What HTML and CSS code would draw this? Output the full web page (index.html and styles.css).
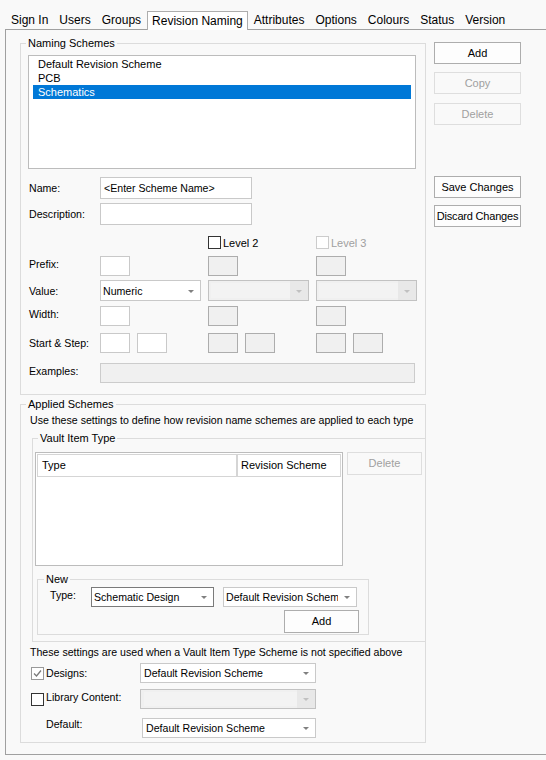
FILE: index.html
```html
<!DOCTYPE html>
<html>
<head>
  <title>Revision Naming</title>
  <link rel="stylesheet" href="styles.css">
</head>
<body>
  <div class="tabs">
    <span class="tab">Sign In</span>
    <span class="tab">Users</span>
    <span class="tab">Groups</span>
    <span class="tab active">Revision Naming</span>
    <span class="tab">Attributes</span>
    <span class="tab">Options</span>
    <span class="tab">Colours</span>
    <span class="tab">Status</span>
    <span class="tab">Version</span>
  </div>

  <div class="panel">
    <div class="top-area">
      <fieldset class="group naming">
        <legend>Naming Schemes</legend>
        <div class="scheme-list">
          <div class="scheme-item">Default Revision Scheme</div>
          <div class="scheme-item">PCB</div>
          <div class="scheme-item selected">Schematics</div>
        </div>

        <div class="form-row row-name">
          <span class="form-label">Name:</span>
          <div class="field name-field">&lt;Enter Scheme Name&gt;</div>
        </div>
        <div class="form-row row-desc">
          <span class="form-label">Description:</span>
          <div class="field name-field"></div>
        </div>
        <div class="form-row row-levels">
          <span class="form-label"></span>
          <div class="cell"></div>
          <div class="cell check-cell">
            <span class="check"></span><span class="check-text">Level 2</span>
          </div>
          <div class="cell check-cell disabled-text">
            <span class="check check-off"></span><span class="check-text">Level 3</span>
          </div>
        </div>
        <div class="form-row row-prefix">
          <span class="form-label raised">Prefix:</span>
          <div class="cell"><div class="field small"></div></div>
          <div class="cell"><div class="field small off"></div></div>
          <div class="cell"><div class="field small off"></div></div>
        </div>
        <div class="form-row row-value">
          <span class="form-label">Value:</span>
          <div class="cell">
            <div class="combo value-combo"><span class="combo-text">Numeric</span><span class="arrow"></span></div>
          </div>
          <div class="cell">
            <div class="combo value-combo off"><span class="combo-text"></span><span class="arrow"></span></div>
          </div>
          <div class="cell">
            <div class="combo value-combo off"><span class="combo-text"></span><span class="arrow"></span></div>
          </div>
        </div>
        <div class="form-row row-width">
          <span class="form-label raised">Width:</span>
          <div class="cell"><div class="field small"></div></div>
          <div class="cell"><div class="field small off"></div></div>
          <div class="cell"><div class="field small off"></div></div>
        </div>
        <div class="form-row row-start">
          <span class="form-label">Start &amp; Step:</span>
          <div class="cell"><div class="field small"></div><div class="field small"></div></div>
          <div class="cell"><div class="field small off"></div><div class="field small off"></div></div>
          <div class="cell"><div class="field small off"></div><div class="field small off"></div></div>
        </div>
        <div class="form-row row-examples">
          <span class="form-label raised">Examples:</span>
          <div class="field examples"></div>
        </div>
      </fieldset>

      <div class="side-buttons">
        <div class="btn">Add</div>
        <div class="btn off btn-copy">Copy</div>
        <div class="btn off btn-delete">Delete</div>
        <div class="btn btn-save">Save Changes</div>
        <div class="btn btn-discard">Discard Changes</div>
      </div>
    </div>

    <fieldset class="group applied">
      <legend>Applied Schemes</legend>
      <div class="hint hint-top">Use these settings to define how revision name schemes are applied to each type</div>

      <fieldset class="group vault">
        <legend>Vault Item Type</legend>
        <div class="list-row">
          <div class="listview">
            <div class="lv-head">
              <div class="lv-col lv-type">Type</div>
              <div class="lv-col lv-scheme">Revision Scheme</div>
            </div>
          </div>
          <div class="btn off lv-delete">Delete</div>
        </div>

        <fieldset class="group new-group">
          <legend>New</legend>
          <div class="type-row">
            <span class="type-label">Type:</span>
            <div class="combo type-combo focus"><span class="combo-text">Schematic Design</span><span class="arrow"></span></div>
            <div class="combo scheme-combo"><span class="combo-text">Default Revision Scheme</span><span class="arrow"></span></div>
          </div>
          <div class="add-row">
            <div class="btn add-btn">Add</div>
          </div>
        </fieldset>
      </fieldset>

      <div class="hint hint-bottom">These settings are used when a Vault Item Type Scheme is not specified above</div>

      <div class="opt-row row-designs">
        <span class="check checked">
          <svg width="11" height="11" viewBox="0 0 11 11"><polyline points="2,5.5 4.5,8 9,2.5" fill="none" stroke="#7a7a7a" stroke-width="1.3"/></svg>
        </span>
        <span class="opt-label">Designs:</span>
        <div class="combo opt-combo"><span class="combo-text">Default Revision Scheme</span><span class="arrow"></span></div>
      </div>
      <div class="opt-row row-library">
        <span class="check"></span>
        <span class="opt-label raised">Library Content:</span>
        <div class="combo opt-combo off"><span class="combo-text"></span><span class="arrow"></span></div>
      </div>
      <div class="opt-row row-default">
        <span class="opt-label default-label">Default:</span>
        <div class="combo opt-combo default-combo"><span class="combo-text">Default Revision Scheme</span><span class="arrow"></span></div>
      </div>
    </fieldset>
  </div>
</body>
</html>
```

FILE: styles.css
```css
body {
  margin: 0;
  width: 546px;
  height: 760px;
  overflow: hidden;
  background-color: #f9f9f9;
  font-family: "Liberation Sans", Arial, sans-serif;
  font-size: 10.6px;
  color: #000;
  white-space: nowrap;
}

/* tab strip */

.tabs {
  display: flex;
  align-items: flex-end;
  height: 18px;
  padding: 11px 0 0 5.5px;
}

.tab {
  padding: 0 5.5px;
  font-size: 12px;
  line-height: 18px;
}

.tab.active {
  position: relative;
  z-index: 1;
  margin-bottom: -1px;
  padding: 0 4.5px;
  background-color: #fff;
  border: 1px solid #adadad;
  border-bottom: none;
}

.panel {
  width: 560px;
  margin-left: 5px;
  padding: 6px 0 11px 14px;
  border: 1px solid #a0a0a0;
  background-color: #f9f9f9;
}

/* group boxes */

.group {
  margin: 0;
  padding: 0;
  min-width: 0;
  border: 1px solid #dcdcdc;
}

.group legend {
  margin-left: 5px;
  padding: 0 2px;
  line-height: 14px;
  font-size: 11px;
}

.top-area {
  display: flex;
  align-items: flex-start;
}

.naming {
  width: 404px;
  padding-bottom: 11px;
}

.scheme-list {
  width: 378px;
  height: 111px;
  margin: 5px 0 0 7px;
  padding: 1px 4px 0;
  background-color: #fff;
  border: 1px solid #bcbcbc;
  font-size: 11px;
}

.scheme-item {
  padding-left: 5px;
  line-height: 14px;
}

.scheme-item.selected {
  background-color: #0078d7;
  color: #fff;
}

/* form rows */

.form-row {
  display: flex;
  align-items: center;
  margin-left: 8px;
}

.form-label {
  flex: none;
  width: 71px;
}

.raised {
  margin-top: -4px;
}

.cell {
  flex: none;
  display: flex;
  align-items: center;
  gap: 7px;
  width: 108px;
}

.check-cell {
  gap: 0;
}

.row-name { margin-top: 8px; }
.row-desc { margin-top: 4px; }
.row-levels { margin-top: 11px; height: 13px; font-size: 11px; }
.row-prefix { margin-top: 7px; }
.row-value { margin-top: 4px; }
.row-width { margin-top: 5px; }
.row-start { margin-top: 7px; }
.row-examples { margin-top: 10px; }

.field {
  box-sizing: border-box;
  height: 22px;
  padding-left: 3px;
  line-height: 20px;
  background-color: #fff;
  border: 1px solid #c9c9c9;
}

.name-field {
  width: 152px;
}

.field.small {
  width: 30px;
  height: 20px;
}

.field.off {
  background-color: #f0f0f0;
  border-color: #adadad;
}

.field.examples {
  width: 315px;
  height: 20px;
  background-color: #f0f0f0;
  border-color: #cccccc;
}

/* checkboxes */

.check {
  flex: none;
  display: inline-flex;
  align-items: center;
  justify-content: center;
  box-sizing: border-box;
  width: 13px;
  height: 13px;
  background-color: #fff;
  border: 1px solid #333;
}

.check.check-off {
  border-color: #cccccc;
}

.check.checked {
  border-color: #999;
}

.check-text {
  margin-left: 2px;
}

.disabled-text {
  color: #a0a0a0;
}

/* combo boxes */

.combo {
  box-sizing: border-box;
  display: flex;
  align-items: center;
  height: 21px;
  padding-left: 2px;
  background-color: #fff;
  border: 1px solid #c9c9c9;
}

.combo-text {
  flex: 1;
  overflow: hidden;
}

.arrow {
  flex: none;
  position: relative;
  align-self: stretch;
  width: 18px;
}

.arrow::after {
  content: "";
  position: absolute;
  left: 6px;
  top: 50%;
  margin-top: -1px;
  border-left: 3px solid transparent;
  border-right: 3px solid transparent;
  border-top: 3px solid #808080;
}

.combo.off {
  background-color: #f0f0f0;
  border-color: #c2c2c2;
}

.combo.off .combo-text {
  align-self: stretch;
  margin: 2px 0;
  background-color: #f3f3f3;
}

.combo.off .arrow {
  background-color: #e8e8e8;
}

.combo.off .arrow::after {
  border-top-color: #c0c0c0;
}

.value-combo {
  width: 101px;
}

/* buttons */

.btn {
  box-sizing: border-box;
  height: 22px;
  line-height: 20px;
  text-align: center;
  background-color: #fdfdfd;
  border: 1px solid #adadad;
  font-size: 11px;
}

.btn.off {
  color: #a0a0a0;
  background-color: #f9f9f9;
  border-color: #dedede;
}

.side-buttons {
  flex: none;
  display: flex;
  flex-direction: column;
  width: 87px;
  margin-left: 8px;
  padding-top: 6px;
}

.btn-copy { margin-top: 8px; }
.btn-delete { margin-top: 9px; }
.btn-save { margin-top: 51px; }
.btn-discard { margin-top: 7px; letter-spacing: -0.2px; }

/* applied schemes */

.applied {
  width: 404px;
  margin-top: 2px;
  padding-bottom: 4px;
}

.hint {
  margin-left: 9px;
  line-height: 14px;
}

.hint-top { margin-top: 2px; }
.hint-bottom { margin-top: 3px; }

.vault {
  margin: 4px 0 0 11px;
  padding-bottom: 6px;
  border-right: none;
}

.list-row {
  display: flex;
  align-items: flex-start;
  margin: 7px 0 0 2px;
}

.listview {
  box-sizing: border-box;
  width: 308px;
  height: 114px;
  padding: 1px;
  background-color: #fff;
  border: 1px solid #bcbcbc;
}

.lv-head {
  display: flex;
  height: 23px;
}

.lv-col {
  box-sizing: border-box;
  line-height: 21px;
  background-color: #fff;
  border: 1px solid #d5d5d5;
  font-size: 11px;
}

.lv-type {
  width: 200px;
  padding-left: 4px;
}

.lv-scheme {
  width: 104px;
  padding-left: 3px;
}

.lv-delete {
  width: 75px;
  height: 23px;
  line-height: 21px;
  margin-left: 4px;
}

.new-group {
  width: 330px;
  margin: 6px 0 0 4px;
  padding-bottom: 1px;
}

.new-group legend {
  margin-left: 6px;
}

.type-row {
  display: flex;
  align-items: center;
  margin-top: 1px;
  padding-left: 12px;
}

.type-label {
  width: 41px;
  margin-top: -4px;
}

.type-combo {
  width: 123px;
  height: 20px;
  margin-right: 9px;
}

.combo.focus {
  border-color: #7a7a7a;
}

.scheme-combo {
  width: 134px;
  height: 20px;
}

.add-row {
  margin-top: 3px;
  padding-left: 246px;
}

.add-btn {
  width: 75px;
  height: 23px;
  line-height: 21px;
}

.opt-row {
  display: flex;
  align-items: center;
  margin-left: 10px;
}

.row-designs { margin-top: 4px; }
.row-library { margin-top: 6px; }
.row-default { margin-top: 9px; margin-left: 25px; }

.opt-label {
  width: 94px;
  margin-left: 2px;
}

.default-label {
  width: 96px;
  margin-left: 0;
  margin-top: -8px;
}

.opt-combo {
  width: 176px;
  height: 20px;
  padding-left: 3px;
}

.default-combo {
  width: 174px;
}
```
